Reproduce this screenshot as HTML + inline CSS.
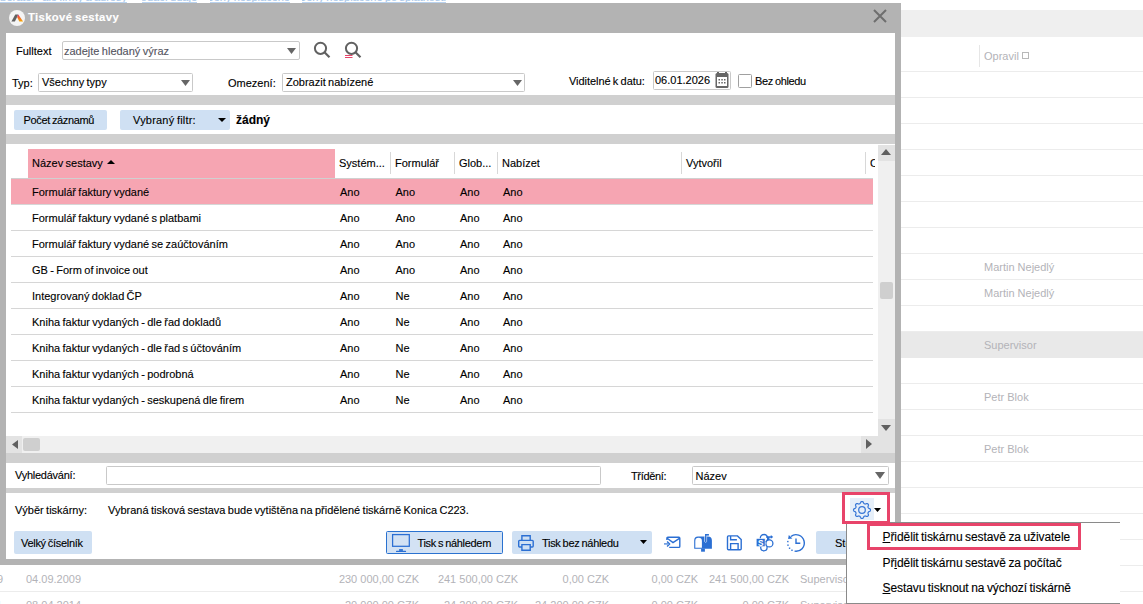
<!DOCTYPE html>
<html><head><meta charset="utf-8"><style>
html,body{margin:0;padding:0;width:1143px;height:604px;overflow:hidden;background:#fff;position:relative}
body{font-family:"Liberation Sans",sans-serif}
.t{position:absolute;white-space:nowrap;word-spacing:-0.7px;-webkit-text-stroke:0.12px currentColor}
u{text-decoration:underline;text-underline-offset:1px}
</style></head><body>
<div style="position:absolute;left:0px;top:-12px;width:127px;height:15px;overflow:hidden"><div class="t" style="right:0;top:4.2px;font-size:11px;line-height:11px;color:#a9c8ea">Odběratel - ale firmy a adresy</div><div style="position:absolute;left:0;right:0;top:14px;height:1px;background:#b9d2ee"></div></div>
<div style="position:absolute;left:142px;top:-12px;width:55px;height:15px;overflow:hidden"><div class="t" style="right:0;top:4.2px;font-size:11px;line-height:11px;color:#a9c8ea">Dodací údaje</div><div style="position:absolute;left:0;right:0;top:14px;height:1px;background:#b9d2ee"></div></div>
<div style="position:absolute;left:210px;top:-12px;width:80px;height:15px;overflow:hidden"><div class="t" style="right:0;top:4.2px;font-size:11px;line-height:11px;color:#a9c8ea">Ceny nesplacené</div><div style="position:absolute;left:0;right:0;top:14px;height:1px;background:#b9d2ee"></div></div>
<div style="position:absolute;left:302px;top:-12px;width:144px;height:15px;overflow:hidden"><div class="t" style="right:0;top:4.2px;font-size:11px;line-height:11px;color:#a9c8ea">Ceny nesplacené po splatnosti</div><div style="position:absolute;left:0;right:0;top:14px;height:1px;background:#b9d2ee"></div></div>
<div style="position:absolute;left:901px;top:10px;width:242px;height:27px;background:#efefef"></div>
<div style="position:absolute;left:979px;top:45px;width:1px;height:22px;background:#e6e6e6"></div>
<div class="t" style="left:984px;top:51.19px;font-size:11px;line-height:11px;color:#b3b3b8;font-weight:normal;transform:scaleY(1.06);transform-origin:0 9.31px;word-spacing:0;-webkit-text-stroke:0;">Opravil</div>
<div style="position:absolute;left:1022px;top:52px;width:7px;height:7px;border:1px solid #b8b8b8;box-sizing:border-box"></div>
<div style="position:absolute;left:901px;top:71px;width:242px;height:1px;background:#ececec"></div>
<div style="position:absolute;left:901px;top:97px;width:242px;height:1px;background:#ececec"></div>
<div style="position:absolute;left:901px;top:123px;width:242px;height:1px;background:#ececec"></div>
<div style="position:absolute;left:901px;top:149px;width:242px;height:1px;background:#ececec"></div>
<div style="position:absolute;left:901px;top:175px;width:242px;height:1px;background:#ececec"></div>
<div style="position:absolute;left:901px;top:201px;width:242px;height:1px;background:#ececec"></div>
<div style="position:absolute;left:901px;top:227px;width:242px;height:1px;background:#ececec"></div>
<div style="position:absolute;left:901px;top:253px;width:242px;height:1px;background:#ececec"></div>
<div style="position:absolute;left:901px;top:279px;width:242px;height:1px;background:#ececec"></div>
<div style="position:absolute;left:901px;top:305px;width:242px;height:1px;background:#ececec"></div>
<div style="position:absolute;left:901px;top:331px;width:242px;height:1px;background:#ececec"></div>
<div style="position:absolute;left:901px;top:357px;width:242px;height:1px;background:#ececec"></div>
<div style="position:absolute;left:901px;top:383px;width:242px;height:1px;background:#ececec"></div>
<div style="position:absolute;left:901px;top:409px;width:242px;height:1px;background:#ececec"></div>
<div style="position:absolute;left:901px;top:435px;width:242px;height:1px;background:#ececec"></div>
<div style="position:absolute;left:901px;top:461px;width:242px;height:1px;background:#ececec"></div>
<div style="position:absolute;left:901px;top:487px;width:242px;height:1px;background:#ececec"></div>
<div style="position:absolute;left:901px;top:513px;width:242px;height:1px;background:#ececec"></div>
<div style="position:absolute;left:901px;top:539px;width:242px;height:1px;background:#ececec"></div>
<div style="position:absolute;left:901px;top:565px;width:242px;height:1px;background:#ececec"></div>
<div style="position:absolute;left:901px;top:591px;width:242px;height:1px;background:#ececec"></div>
<div style="position:absolute;left:901px;top:332px;width:242px;height:26px;background:#e9e9e9"></div>
<div class="t" style="left:984px;top:261.69px;font-size:11px;line-height:11px;color:#b3b3b8;font-weight:normal;transform:scaleY(1.06);transform-origin:0 9.31px;word-spacing:0;-webkit-text-stroke:0;">Martin Nejedlý</div>
<div class="t" style="left:984px;top:287.69px;font-size:11px;line-height:11px;color:#b3b3b8;font-weight:normal;transform:scaleY(1.06);transform-origin:0 9.31px;word-spacing:0;-webkit-text-stroke:0;">Martin Nejedlý</div>
<div class="t" style="left:984px;top:339.69px;font-size:11px;line-height:11px;color:#b3b3b8;font-weight:normal;transform:scaleY(1.06);transform-origin:0 9.31px;word-spacing:0;-webkit-text-stroke:0;">Supervisor</div>
<div class="t" style="left:984px;top:391.69px;font-size:11px;line-height:11px;color:#b3b3b8;font-weight:normal;transform:scaleY(1.06);transform-origin:0 9.31px;word-spacing:0;-webkit-text-stroke:0;">Petr Blok</div>
<div class="t" style="left:984px;top:443.69px;font-size:11px;line-height:11px;color:#b3b3b8;font-weight:normal;transform:scaleY(1.06);transform-origin:0 9.31px;word-spacing:0;-webkit-text-stroke:0;">Petr Blok</div>
<div style="position:absolute;left:0px;top:591px;width:1143px;height:1px;background:#ececec"></div>
<div class="t" style="left:-3px;top:573.69px;font-size:11px;line-height:11px;color:#b3b3b8;font-weight:normal;transform:scaleY(1.06);transform-origin:0 9.31px;word-spacing:0;-webkit-text-stroke:0;">9</div>
<div class="t" style="left:26px;top:573.69px;font-size:11px;line-height:11px;color:#b3b3b8;font-weight:normal;transform:scaleY(1.06);transform-origin:0 9.31px;word-spacing:0;-webkit-text-stroke:0;">04.09.2009</div>
<div class="t" style="right:724px;top:573.69px;font-size:11px;line-height:11px;color:#b3b3b8;word-spacing:0;-webkit-text-stroke:0;transform:scaleY(1.06);transform-origin:0 9.31px">230 000,00 CZK</div>
<div class="t" style="right:625px;top:573.69px;font-size:11px;line-height:11px;color:#b3b3b8;word-spacing:0;-webkit-text-stroke:0;transform:scaleY(1.06);transform-origin:0 9.31px">241 500,00 CZK</div>
<div class="t" style="right:534px;top:573.69px;font-size:11px;line-height:11px;color:#b3b3b8;word-spacing:0;-webkit-text-stroke:0;transform:scaleY(1.06);transform-origin:0 9.31px">0,00 CZK</div>
<div class="t" style="right:445px;top:573.69px;font-size:11px;line-height:11px;color:#b3b3b8;word-spacing:0;-webkit-text-stroke:0;transform:scaleY(1.06);transform-origin:0 9.31px">0,00 CZK</div>
<div class="t" style="right:354px;top:573.69px;font-size:11px;line-height:11px;color:#b3b3b8;word-spacing:0;-webkit-text-stroke:0;transform:scaleY(1.06);transform-origin:0 9.31px">241 500,00 CZK</div>
<div class="t" style="left:800px;top:573.69px;font-size:11px;line-height:11px;color:#b3b3b8;font-weight:normal;transform:scaleY(1.06);transform-origin:0 9.31px;word-spacing:0;-webkit-text-stroke:0;">Supervisor</div>
<div class="t" style="left:-4px;top:599.69px;font-size:11px;line-height:11px;color:#b3b3b8;font-weight:normal;transform:scaleY(1.06);transform-origin:0 9.31px;word-spacing:0;-webkit-text-stroke:0;">1</div>
<div class="t" style="left:26px;top:599.69px;font-size:11px;line-height:11px;color:#b3b3b8;font-weight:normal;transform:scaleY(1.06);transform-origin:0 9.31px;word-spacing:0;-webkit-text-stroke:0;">08.04.2014</div>
<div class="t" style="right:724px;top:599.69px;font-size:11px;line-height:11px;color:#b3b3b8;word-spacing:0;-webkit-text-stroke:0;transform:scaleY(1.06);transform-origin:0 9.31px">20 000,00 CZK</div>
<div class="t" style="right:625px;top:599.69px;font-size:11px;line-height:11px;color:#b3b3b8;word-spacing:0;-webkit-text-stroke:0;transform:scaleY(1.06);transform-origin:0 9.31px">24 200,00 CZK</div>
<div class="t" style="right:534px;top:599.69px;font-size:11px;line-height:11px;color:#b3b3b8;word-spacing:0;-webkit-text-stroke:0;transform:scaleY(1.06);transform-origin:0 9.31px">24 200,00 CZK</div>
<div class="t" style="right:445px;top:599.69px;font-size:11px;line-height:11px;color:#b3b3b8;word-spacing:0;-webkit-text-stroke:0;transform:scaleY(1.06);transform-origin:0 9.31px">0,00 CZK</div>
<div class="t" style="right:354px;top:599.69px;font-size:11px;line-height:11px;color:#b3b3b8;word-spacing:0;-webkit-text-stroke:0;transform:scaleY(1.06);transform-origin:0 9.31px">0,00 CZK</div>
<div class="t" style="left:800px;top:599.69px;font-size:11px;line-height:11px;color:#b3b3b8;font-weight:normal;transform:scaleY(1.06);transform-origin:0 9.31px;word-spacing:0;-webkit-text-stroke:0;">Supervisor</div>
<div style="position:absolute;left:-10px;top:3px;width:911px;height:562px;background:#b3b3b3"></div>
<div style="position:absolute;left:6px;top:33px;width:889px;height:526px;background:#fff"></div>
<svg style="position:absolute;left:9px;top:10px" width="16" height="16" viewBox="0 0 16 16"><defs><linearGradient id="lg" x1="0" y1="0" x2="0" y2="1"><stop offset="0" stop-color="#e5236e"/><stop offset="0.45" stop-color="#f26a2e"/><stop offset="1" stop-color="#f7a800"/></linearGradient></defs><circle cx="8" cy="8" r="8" fill="#f4f4f4"/><path d="M6.3 4.5 L9.3 4.5 L5.9 11.5 L2.4 11.5Z" fill="#626262"/><path d="M9.3 4.5 L14.1 11.5 L10.3 11.5 L8.1 7Z" fill="url(#lg)"/></svg>
<div class="t" style="left:28px;top:11.93px;font-size:11.3px;line-height:11.3px;color:#fff;font-weight:bold;letter-spacing:0.35px">Tiskové sestavy</div>
<svg style="position:absolute;left:873px;top:9px" width="14" height="14" viewBox="0 0 14 14"><path d="M1 1L13 13M13 1L1 13" stroke="#6e6e6e" stroke-width="2"/></svg>
<div class="t" style="left:16px;top:45.69px;font-size:11px;line-height:11px;color:#000;font-weight:normal;transform:scaleY(1.06);transform-origin:0 9.31px;">Fulltext</div>
<div style="position:absolute;left:62px;top:41px;width:238px;height:19px;border:1px solid #c9c9c9;box-sizing:border-box;border-radius:2px;background:#fff"></div>
<div class="t" style="left:64px;top:45.69px;font-size:11px;line-height:11px;color:#55555f;font-weight:normal;transform:scaleY(1.06);transform-origin:0 9.31px;">zadejte hledaný výraz</div>
<svg style="position:absolute;left:287px;top:48px" width="9" height="6" viewBox="0 0 9 6"><path d="M0 0H9L4.5 6Z" fill="#666"/></svg>
<svg style="position:absolute;left:313px;top:41px" width="19" height="18" viewBox="0 0 19 18"><circle cx="7.5" cy="7.3" r="5.6" fill="none" stroke="#616161" stroke-width="2"/><path d="M11.5 11.3L16.5 16.3" stroke="#616161" stroke-width="2.2"/></svg>
<svg style="position:absolute;left:344px;top:41px" width="19" height="18" viewBox="0 0 19 18"><circle cx="7.5" cy="7.3" r="5.6" fill="none" stroke="#616161" stroke-width="2"/><path d="M11.5 11.3L16.5 16.3" stroke="#616161" stroke-width="2.2"/><path d="M1 14.5H8.5M1 16.5H8.5" stroke="#e8446a" stroke-width="1"/></svg>
<div class="t" style="left:12px;top:77.69px;font-size:11px;line-height:11px;color:#000;font-weight:normal;transform:scaleY(1.06);transform-origin:0 9.31px;">Typ:</div>
<div style="position:absolute;left:38px;top:73px;width:155px;height:19px;border:1px solid #c9c9c9;box-sizing:border-box;border-radius:1.5px"></div>
<div class="t" style="left:42px;top:76.69px;font-size:11px;line-height:11px;color:#000;font-weight:normal;transform:scaleY(1.06);transform-origin:0 9.31px;">Všechny typy</div>
<svg style="position:absolute;left:181px;top:80px" width="9" height="6" viewBox="0 0 9 6"><path d="M0 0H9L4.5 6Z" fill="#666"/></svg>
<div class="t" style="left:228px;top:77.69px;font-size:11px;line-height:11px;color:#000;font-weight:normal;transform:scaleY(1.06);transform-origin:0 9.31px;">Omezení:</div>
<div style="position:absolute;left:282px;top:73px;width:243px;height:19px;border:1px solid #c9c9c9;box-sizing:border-box;border-radius:1.5px"></div>
<div class="t" style="left:286px;top:76.69px;font-size:11px;line-height:11px;color:#000;font-weight:normal;transform:scaleY(1.06);transform-origin:0 9.31px;">Zobrazit nabízené</div>
<svg style="position:absolute;left:513px;top:80px" width="9" height="6" viewBox="0 0 9 6"><path d="M0 0H9L4.5 6Z" fill="#666"/></svg>
<div class="t" style="left:569px;top:75.69px;font-size:11px;line-height:11px;color:#000;font-weight:normal;transform:scaleY(1.06);transform-origin:0 9.31px;letter-spacing:-0.05px">Viditelné k datu:</div>
<div style="position:absolute;left:653px;top:71px;width:78px;height:19px;border:1px solid #c9c9c9;box-sizing:border-box;border-radius:1.5px"></div>
<div class="t" style="left:655px;top:74.69px;font-size:11px;line-height:11px;color:#000;font-weight:normal;transform:scaleY(1.06);transform-origin:0 9.31px;">06.01.2026</div>
<svg style="position:absolute;left:715px;top:72px" width="14" height="16" viewBox="0 0 14 16"><rect x="0.5" y="1" width="13" height="15" rx="1.5" fill="#666"/><rect x="2" y="5" width="10" height="9" fill="#fff"/><rect x="2" y="0" width="2" height="3" fill="#666"/><rect x="10" y="0" width="2" height="3" fill="#666"/><g fill="#666"><rect x="3.5" y="7" width="1.5" height="1.5"/><rect x="6.3" y="7" width="1.5" height="1.5"/><rect x="9" y="7" width="1.5" height="1.5"/><rect x="3.5" y="10" width="1.5" height="1.5"/><rect x="6.3" y="10" width="1.5" height="1.5"/><rect x="9" y="10" width="1.5" height="1.5"/></g></svg>
<div style="position:absolute;left:738px;top:74px;width:14px;height:14px;border:1px solid #a0a0a0;box-sizing:border-box;border-radius:1.5px"></div>
<div class="t" style="left:755px;top:75.69px;font-size:11px;line-height:11px;color:#000;font-weight:normal;transform:scaleY(1.06);transform-origin:0 9.31px;letter-spacing:-0.35px">Bez ohledu</div>
<div style="position:absolute;left:6px;top:95px;width:889px;height:10px;background:#d0d0d0"></div>
<div style="position:absolute;left:14px;top:110px;width:93px;height:20px;background:#cfe0f3;border-radius:2px"></div>
<div class="t" style="left:23.5px;top:114.69px;font-size:11px;line-height:11px;color:#000;font-weight:normal;transform:scaleY(1.06);transform-origin:0 9.31px;letter-spacing:-0.35px">Počet záznamů</div>
<div style="position:absolute;left:120px;top:110px;width:110px;height:20px;background:#cfe0f3;border-radius:2px"></div>
<div class="t" style="left:133px;top:114.69px;font-size:11px;line-height:11px;color:#000;font-weight:normal;transform:scaleY(1.06);transform-origin:0 9.31px;letter-spacing:0.2px">Vybraný filtr:</div>
<svg style="position:absolute;left:218px;top:118px" width="8" height="4" viewBox="0 0 8 4"><path d="M0 0H8L4.0 4Z" fill="#000"/></svg>
<div class="t" style="left:236px;top:113.84px;font-size:12px;line-height:12px;color:#000;font-weight:bold;">žádný</div>
<div style="position:absolute;left:6px;top:134px;width:889px;height:10px;background:#d0d0d0"></div>
<div style="position:absolute;left:28px;top:149px;width:307px;height:29px;background:#f6a5b2"></div>
<div class="t" style="left:32px;top:158.19px;font-size:11px;line-height:11px;color:#000;font-weight:normal;transform:scaleY(1.06);transform-origin:0 9.31px;">Název sestavy</div>
<svg style="position:absolute;left:107px;top:160px" width="8" height="4" viewBox="0 0 8 4"><path d="M0 4H8L4 0Z" fill="#000"/></svg>
<div class="t" style="left:339px;top:158.19px;font-size:11px;line-height:11px;color:#000;font-weight:normal;transform:scaleY(1.06);transform-origin:0 9.31px;">Systém...</div>
<div class="t" style="left:395px;top:158.19px;font-size:11px;line-height:11px;color:#000;font-weight:normal;transform:scaleY(1.06);transform-origin:0 9.31px;">Formulář</div>
<div class="t" style="left:459px;top:158.19px;font-size:11px;line-height:11px;color:#000;font-weight:normal;transform:scaleY(1.06);transform-origin:0 9.31px;">Glob...</div>
<div class="t" style="left:502px;top:158.19px;font-size:11px;line-height:11px;color:#000;font-weight:normal;transform:scaleY(1.06);transform-origin:0 9.31px;">Nabízet</div>
<div class="t" style="left:686px;top:158.19px;font-size:11px;line-height:11px;color:#000;font-weight:normal;transform:scaleY(1.06);transform-origin:0 9.31px;">Vytvořil</div>
<div style="position:absolute;left:390px;top:152px;width:1px;height:22px;background:#d8d8d8"></div>
<div style="position:absolute;left:454px;top:152px;width:1px;height:22px;background:#d8d8d8"></div>
<div style="position:absolute;left:497px;top:152px;width:1px;height:22px;background:#d8d8d8"></div>
<div style="position:absolute;left:681px;top:152px;width:1px;height:22px;background:#d8d8d8"></div>
<div style="position:absolute;left:865px;top:152px;width:1px;height:22px;background:#d8d8d8"></div>
<div style="position:absolute;left:870px;top:150px;width:5px;height:30px;overflow:hidden"><div class="t" style="left:0;top:8.19px;font-size:11px;line-height:11px">C</div></div>
<div style="position:absolute;left:11px;top:178px;width:862px;height:1px;background:#d0d0d0"></div>
<div style="position:absolute;left:11px;top:179px;width:862px;height:25px;background:#f6a5b2"></div>
<div class="t" style="left:32px;top:186.69px;font-size:11px;line-height:11px;color:#000;font-weight:normal;transform:scaleY(1.06);transform-origin:0 9.31px;">Formulář faktury vydané</div>
<div class="t" style="left:340px;top:186.69px;font-size:11px;line-height:11px;color:#000;font-weight:normal;transform:scaleY(1.06);transform-origin:0 9.31px;">Ano</div>
<div class="t" style="left:395.5px;top:186.69px;font-size:11px;line-height:11px;color:#000;font-weight:normal;transform:scaleY(1.06);transform-origin:0 9.31px;">Ano</div>
<div class="t" style="left:460px;top:186.69px;font-size:11px;line-height:11px;color:#000;font-weight:normal;transform:scaleY(1.06);transform-origin:0 9.31px;">Ano</div>
<div class="t" style="left:503px;top:186.69px;font-size:11px;line-height:11px;color:#000;font-weight:normal;transform:scaleY(1.06);transform-origin:0 9.31px;">Ano</div>
<div style="position:absolute;left:11px;top:204px;width:862px;height:1px;background:#d6d6d6"></div>
<div class="t" style="left:32px;top:212.69px;font-size:11px;line-height:11px;color:#000;font-weight:normal;transform:scaleY(1.06);transform-origin:0 9.31px;">Formulář faktury vydané s platbami</div>
<div class="t" style="left:340px;top:212.69px;font-size:11px;line-height:11px;color:#000;font-weight:normal;transform:scaleY(1.06);transform-origin:0 9.31px;">Ano</div>
<div class="t" style="left:395.5px;top:212.69px;font-size:11px;line-height:11px;color:#000;font-weight:normal;transform:scaleY(1.06);transform-origin:0 9.31px;">Ano</div>
<div class="t" style="left:460px;top:212.69px;font-size:11px;line-height:11px;color:#000;font-weight:normal;transform:scaleY(1.06);transform-origin:0 9.31px;">Ano</div>
<div class="t" style="left:503px;top:212.69px;font-size:11px;line-height:11px;color:#000;font-weight:normal;transform:scaleY(1.06);transform-origin:0 9.31px;">Ano</div>
<div style="position:absolute;left:11px;top:230px;width:862px;height:1px;background:#d6d6d6"></div>
<div class="t" style="left:32px;top:238.69px;font-size:11px;line-height:11px;color:#000;font-weight:normal;transform:scaleY(1.06);transform-origin:0 9.31px;">Formulář faktury vydané se zaúčtováním</div>
<div class="t" style="left:340px;top:238.69px;font-size:11px;line-height:11px;color:#000;font-weight:normal;transform:scaleY(1.06);transform-origin:0 9.31px;">Ano</div>
<div class="t" style="left:395.5px;top:238.69px;font-size:11px;line-height:11px;color:#000;font-weight:normal;transform:scaleY(1.06);transform-origin:0 9.31px;">Ano</div>
<div class="t" style="left:460px;top:238.69px;font-size:11px;line-height:11px;color:#000;font-weight:normal;transform:scaleY(1.06);transform-origin:0 9.31px;">Ano</div>
<div class="t" style="left:503px;top:238.69px;font-size:11px;line-height:11px;color:#000;font-weight:normal;transform:scaleY(1.06);transform-origin:0 9.31px;">Ano</div>
<div style="position:absolute;left:11px;top:256px;width:862px;height:1px;background:#d6d6d6"></div>
<div class="t" style="left:32px;top:264.69px;font-size:11px;line-height:11px;color:#000;font-weight:normal;transform:scaleY(1.06);transform-origin:0 9.31px;">GB - Form of invoice out</div>
<div class="t" style="left:340px;top:264.69px;font-size:11px;line-height:11px;color:#000;font-weight:normal;transform:scaleY(1.06);transform-origin:0 9.31px;">Ano</div>
<div class="t" style="left:395.5px;top:264.69px;font-size:11px;line-height:11px;color:#000;font-weight:normal;transform:scaleY(1.06);transform-origin:0 9.31px;">Ano</div>
<div class="t" style="left:460px;top:264.69px;font-size:11px;line-height:11px;color:#000;font-weight:normal;transform:scaleY(1.06);transform-origin:0 9.31px;">Ano</div>
<div class="t" style="left:503px;top:264.69px;font-size:11px;line-height:11px;color:#000;font-weight:normal;transform:scaleY(1.06);transform-origin:0 9.31px;">Ano</div>
<div style="position:absolute;left:11px;top:282px;width:862px;height:1px;background:#d6d6d6"></div>
<div class="t" style="left:32px;top:290.69px;font-size:11px;line-height:11px;color:#000;font-weight:normal;transform:scaleY(1.06);transform-origin:0 9.31px;">Integrovaný doklad ČP</div>
<div class="t" style="left:340px;top:290.69px;font-size:11px;line-height:11px;color:#000;font-weight:normal;transform:scaleY(1.06);transform-origin:0 9.31px;">Ano</div>
<div class="t" style="left:395.5px;top:290.69px;font-size:11px;line-height:11px;color:#000;font-weight:normal;transform:scaleY(1.06);transform-origin:0 9.31px;">Ne</div>
<div class="t" style="left:460px;top:290.69px;font-size:11px;line-height:11px;color:#000;font-weight:normal;transform:scaleY(1.06);transform-origin:0 9.31px;">Ano</div>
<div class="t" style="left:503px;top:290.69px;font-size:11px;line-height:11px;color:#000;font-weight:normal;transform:scaleY(1.06);transform-origin:0 9.31px;">Ano</div>
<div style="position:absolute;left:11px;top:308px;width:862px;height:1px;background:#d6d6d6"></div>
<div class="t" style="left:32px;top:316.69px;font-size:11px;line-height:11px;color:#000;font-weight:normal;transform:scaleY(1.06);transform-origin:0 9.31px;">Kniha faktur vydaných - dle řad dokladů</div>
<div class="t" style="left:340px;top:316.69px;font-size:11px;line-height:11px;color:#000;font-weight:normal;transform:scaleY(1.06);transform-origin:0 9.31px;">Ano</div>
<div class="t" style="left:395.5px;top:316.69px;font-size:11px;line-height:11px;color:#000;font-weight:normal;transform:scaleY(1.06);transform-origin:0 9.31px;">Ne</div>
<div class="t" style="left:460px;top:316.69px;font-size:11px;line-height:11px;color:#000;font-weight:normal;transform:scaleY(1.06);transform-origin:0 9.31px;">Ano</div>
<div class="t" style="left:503px;top:316.69px;font-size:11px;line-height:11px;color:#000;font-weight:normal;transform:scaleY(1.06);transform-origin:0 9.31px;">Ano</div>
<div style="position:absolute;left:11px;top:334px;width:862px;height:1px;background:#d6d6d6"></div>
<div class="t" style="left:32px;top:342.69px;font-size:11px;line-height:11px;color:#000;font-weight:normal;transform:scaleY(1.06);transform-origin:0 9.31px;">Kniha faktur vydaných - dle řad s účtováním</div>
<div class="t" style="left:340px;top:342.69px;font-size:11px;line-height:11px;color:#000;font-weight:normal;transform:scaleY(1.06);transform-origin:0 9.31px;">Ano</div>
<div class="t" style="left:395.5px;top:342.69px;font-size:11px;line-height:11px;color:#000;font-weight:normal;transform:scaleY(1.06);transform-origin:0 9.31px;">Ne</div>
<div class="t" style="left:460px;top:342.69px;font-size:11px;line-height:11px;color:#000;font-weight:normal;transform:scaleY(1.06);transform-origin:0 9.31px;">Ano</div>
<div class="t" style="left:503px;top:342.69px;font-size:11px;line-height:11px;color:#000;font-weight:normal;transform:scaleY(1.06);transform-origin:0 9.31px;">Ano</div>
<div style="position:absolute;left:11px;top:360px;width:862px;height:1px;background:#d6d6d6"></div>
<div class="t" style="left:32px;top:368.69px;font-size:11px;line-height:11px;color:#000;font-weight:normal;transform:scaleY(1.06);transform-origin:0 9.31px;">Kniha faktur vydaných - podrobná</div>
<div class="t" style="left:340px;top:368.69px;font-size:11px;line-height:11px;color:#000;font-weight:normal;transform:scaleY(1.06);transform-origin:0 9.31px;">Ano</div>
<div class="t" style="left:395.5px;top:368.69px;font-size:11px;line-height:11px;color:#000;font-weight:normal;transform:scaleY(1.06);transform-origin:0 9.31px;">Ne</div>
<div class="t" style="left:460px;top:368.69px;font-size:11px;line-height:11px;color:#000;font-weight:normal;transform:scaleY(1.06);transform-origin:0 9.31px;">Ano</div>
<div class="t" style="left:503px;top:368.69px;font-size:11px;line-height:11px;color:#000;font-weight:normal;transform:scaleY(1.06);transform-origin:0 9.31px;">Ano</div>
<div style="position:absolute;left:11px;top:386px;width:862px;height:1px;background:#d6d6d6"></div>
<div class="t" style="left:32px;top:394.69px;font-size:11px;line-height:11px;color:#000;font-weight:normal;transform:scaleY(1.06);transform-origin:0 9.31px;">Kniha faktur vydaných - seskupená dle firem</div>
<div class="t" style="left:340px;top:394.69px;font-size:11px;line-height:11px;color:#000;font-weight:normal;transform:scaleY(1.06);transform-origin:0 9.31px;">Ano</div>
<div class="t" style="left:395.5px;top:394.69px;font-size:11px;line-height:11px;color:#000;font-weight:normal;transform:scaleY(1.06);transform-origin:0 9.31px;">Ne</div>
<div class="t" style="left:460px;top:394.69px;font-size:11px;line-height:11px;color:#000;font-weight:normal;transform:scaleY(1.06);transform-origin:0 9.31px;">Ano</div>
<div class="t" style="left:503px;top:394.69px;font-size:11px;line-height:11px;color:#000;font-weight:normal;transform:scaleY(1.06);transform-origin:0 9.31px;">Ano</div>
<div style="position:absolute;left:11px;top:412px;width:862px;height:1px;background:#d6d6d6"></div>
<div style="position:absolute;left:878px;top:145px;width:17px;height:291px;background:#f0f0f0"></div>
<div style="position:absolute;left:878px;top:145px;width:17px;height:16px;background:#e3e3e3"></div>
<svg style="position:absolute;left:881px;top:149px" width="10" height="6" viewBox="0 0 10 6"><path d="M0 6H10L5 0Z" fill="#606060"/></svg>
<div style="position:absolute;left:880px;top:282px;width:13px;height:17px;background:#cfcfcf;border-radius:2px"></div>
<div style="position:absolute;left:878px;top:419px;width:17px;height:17px;background:#e3e3e3"></div>
<svg style="position:absolute;left:881px;top:425px" width="10" height="6" viewBox="0 0 10 6"><path d="M0 0H10L5 6Z" fill="#606060"/></svg>
<div style="position:absolute;left:6px;top:436px;width:872px;height:17px;background:#f0f0f0"></div>
<div style="position:absolute;left:6px;top:436px;width:16px;height:17px;background:#e3e3e3"></div>
<svg style="position:absolute;left:12px;top:440px" width="6" height="9" viewBox="0 0 6 9"><path d="M6 0V9L0 4.5Z" fill="#606060"/></svg>
<div style="position:absolute;left:23px;top:438px;width:17px;height:13px;background:#cfcfcf;border-radius:2px"></div>
<div style="position:absolute;left:861px;top:436px;width:17px;height:17px;background:#e3e3e3"></div>
<svg style="position:absolute;left:866px;top:439px" width="6" height="10" viewBox="0 0 6 10"><path d="M0 0V10L6 5Z" fill="#606060"/></svg>
<div style="position:absolute;left:878px;top:436px;width:17px;height:17px;background:#e3e3e3"></div>
<div style="position:absolute;left:6px;top:453px;width:889px;height:10px;background:#d0d0d0"></div>
<div class="t" style="left:15px;top:469.69px;font-size:11px;line-height:11px;color:#000;font-weight:normal;transform:scaleY(1.06);transform-origin:0 9.31px;letter-spacing:-0.25px">Vyhledávání:</div>
<div style="position:absolute;left:106px;top:466px;width:495px;height:19px;border:1px solid #c9c9c9;box-sizing:border-box;border-radius:1.5px"></div>
<div class="t" style="left:631px;top:470.69px;font-size:11px;line-height:11px;color:#000;font-weight:normal;transform:scaleY(1.06);transform-origin:0 9.31px;letter-spacing:-0.35px">Třídění:</div>
<div style="position:absolute;left:692px;top:466px;width:197px;height:19px;border:1px solid #c9c9c9;box-sizing:border-box;border-radius:1.5px"></div>
<div class="t" style="left:695.5px;top:470.69px;font-size:11px;line-height:11px;color:#000;font-weight:normal;transform:scaleY(1.06);transform-origin:0 9.31px;">Název</div>
<svg style="position:absolute;left:875px;top:472px" width="10" height="7" viewBox="0 0 10 7"><path d="M0 0H10L5.0 7Z" fill="#666"/></svg>
<div style="position:absolute;left:6px;top:488px;width:889px;height:5px;background:#d0d0d0"></div>
<div class="t" style="left:15px;top:504.69px;font-size:11px;line-height:11px;color:#000;font-weight:normal;transform:scaleY(1.06);transform-origin:0 9.31px;">Výběr tiskárny:</div>
<div class="t" style="left:108px;top:504.69px;font-size:11px;line-height:11px;color:#000;font-weight:normal;transform:scaleY(1.06);transform-origin:0 9.31px;">Vybraná tisková sestava bude vytištěna na přidělené tiskárně Konica C223.</div>
<div style="position:absolute;left:850px;top:498px;width:24px;height:22px;background:#e6eff9"></div>
<svg style="position:absolute;left:844px;top:492px" width="36" height="36" viewBox="0 0 36 36"><path fill="none" stroke="#3a78d6" stroke-width="1.25" d="M18.00 9.55 L18.22 9.56 L18.44 9.59 L18.66 9.66 L18.87 9.76 L19.06 9.92 L19.24 10.15 L19.40 10.44 L19.54 10.75 L19.67 11.05 L19.80 11.28 L19.94 11.46 L20.08 11.60 L20.23 11.70 L20.39 11.78 L20.54 11.86 L20.71 11.92 L20.88 11.97 L21.06 12.00 L21.25 12.01 L21.48 11.98 L21.74 11.90 L22.04 11.79 L22.36 11.66 L22.67 11.57 L22.96 11.54 L23.21 11.56 L23.43 11.64 L23.63 11.75 L23.81 11.88 L23.98 12.02 L24.12 12.19 L24.25 12.37 L24.36 12.57 L24.44 12.79 L24.46 13.04 L24.43 13.33 L24.34 13.64 L24.21 13.96 L24.10 14.26 L24.02 14.52 L23.99 14.75 L24.00 14.94 L24.03 15.12 L24.08 15.29 L24.14 15.46 L24.22 15.61 L24.30 15.77 L24.40 15.92 L24.54 16.06 L24.72 16.20 L24.95 16.33 L25.25 16.46 L25.56 16.60 L25.85 16.76 L26.08 16.94 L26.24 17.13 L26.34 17.34 L26.41 17.56 L26.44 17.78 L26.45 18.00 L26.44 18.22 L26.41 18.44 L26.34 18.66 L26.24 18.87 L26.08 19.06 L25.85 19.24 L25.56 19.40 L25.25 19.54 L24.95 19.67 L24.72 19.80 L24.54 19.94 L24.40 20.08 L24.30 20.23 L24.22 20.39 L24.14 20.54 L24.08 20.71 L24.03 20.88 L24.00 21.06 L23.99 21.25 L24.02 21.48 L24.10 21.74 L24.21 22.04 L24.34 22.36 L24.43 22.67 L24.46 22.96 L24.44 23.21 L24.36 23.43 L24.25 23.63 L24.12 23.81 L23.98 23.98 L23.81 24.12 L23.63 24.25 L23.43 24.36 L23.21 24.44 L22.96 24.46 L22.67 24.43 L22.36 24.34 L22.04 24.21 L21.74 24.10 L21.48 24.02 L21.25 23.99 L21.06 24.00 L20.88 24.03 L20.71 24.08 L20.54 24.14 L20.39 24.22 L20.23 24.30 L20.08 24.40 L19.94 24.54 L19.80 24.72 L19.67 24.95 L19.54 25.25 L19.40 25.56 L19.24 25.85 L19.06 26.08 L18.87 26.24 L18.66 26.34 L18.44 26.41 L18.22 26.44 L18.00 26.45 L17.78 26.44 L17.56 26.41 L17.34 26.34 L17.13 26.24 L16.94 26.08 L16.76 25.85 L16.60 25.56 L16.46 25.25 L16.33 24.95 L16.20 24.72 L16.06 24.54 L15.92 24.40 L15.77 24.30 L15.61 24.22 L15.46 24.14 L15.29 24.08 L15.12 24.03 L14.94 24.00 L14.75 23.99 L14.52 24.02 L14.26 24.10 L13.96 24.21 L13.64 24.34 L13.33 24.43 L13.04 24.46 L12.79 24.44 L12.57 24.36 L12.37 24.25 L12.19 24.12 L12.02 23.98 L11.88 23.81 L11.75 23.63 L11.64 23.43 L11.56 23.21 L11.54 22.96 L11.57 22.67 L11.66 22.36 L11.79 22.04 L11.90 21.74 L11.98 21.48 L12.01 21.25 L12.00 21.06 L11.97 20.88 L11.92 20.71 L11.86 20.54 L11.78 20.39 L11.70 20.23 L11.60 20.08 L11.46 19.94 L11.28 19.80 L11.05 19.67 L10.75 19.54 L10.44 19.40 L10.15 19.24 L9.92 19.06 L9.76 18.87 L9.66 18.66 L9.59 18.44 L9.56 18.22 L9.55 18.00 L9.56 17.78 L9.59 17.56 L9.66 17.34 L9.76 17.13 L9.92 16.94 L10.15 16.76 L10.44 16.60 L10.75 16.46 L11.05 16.33 L11.28 16.20 L11.46 16.06 L11.60 15.92 L11.70 15.77 L11.78 15.61 L11.86 15.46 L11.92 15.29 L11.97 15.12 L12.00 14.94 L12.01 14.75 L11.98 14.52 L11.90 14.26 L11.79 13.96 L11.66 13.64 L11.57 13.33 L11.54 13.04 L11.56 12.79 L11.64 12.57 L11.75 12.37 L11.88 12.19 L12.02 12.02 L12.19 11.88 L12.37 11.75 L12.57 11.64 L12.79 11.56 L13.04 11.54 L13.33 11.57 L13.64 11.66 L13.96 11.79 L14.26 11.90 L14.52 11.98 L14.75 12.01 L14.94 12.00 L15.12 11.97 L15.29 11.92 L15.46 11.86 L15.61 11.78 L15.77 11.70 L15.92 11.60 L16.06 11.46 L16.20 11.28 L16.33 11.05 L16.46 10.75 L16.60 10.44 L16.76 10.15 L16.94 9.92 L17.13 9.76 L17.34 9.66 L17.56 9.59 L17.78 9.56 L18.00 9.55Z"/><circle cx="18" cy="18" r="3.3" fill="none" stroke="#3a78d6" stroke-width="1.25"/></svg>
<svg style="position:absolute;left:874px;top:508px" width="7" height="4" viewBox="0 0 7 4"><path d="M0 0H7L3.5 4Z" fill="#000"/></svg>
<div style="position:absolute;left:14px;top:531px;width:78px;height:23px;background:#cfe0f3;border-radius:2px"></div>
<div class="t" style="left:21px;top:537.69px;font-size:11px;line-height:11px;color:#000;font-weight:normal;transform:scaleY(1.06);transform-origin:0 9.31px;letter-spacing:-0.3px">Velký číselník</div>
<div style="position:absolute;left:386px;top:531px;width:117px;height:23px;background:#d3e2f4;border:1px solid #2a72d0;box-sizing:border-box;border-radius:1.5px"></div>
<svg style="position:absolute;left:388px;top:530px" width="26" height="24" viewBox="0 0 26 24"><rect x="4.6" y="4.6" width="16.7" height="11.7" fill="none" stroke="#2b6fd3" stroke-width="1.25"/><rect x="11.1" y="19.1" width="3.8" height="1.8" fill="#2b6fd3"/><rect x="8" y="20.7" width="10.1" height="1.3" rx="0.6" fill="#2b6fd3"/></svg>
<div class="t" style="left:417.5px;top:537.69px;font-size:11px;line-height:11px;color:#000;font-weight:normal;transform:scaleY(1.06);transform-origin:0 9.31px;letter-spacing:-0.32px">Tisk s náhledem</div>
<div style="position:absolute;left:512px;top:531px;width:140px;height:23px;background:#cfe0f3;border-radius:2px"></div>
<svg style="position:absolute;left:514px;top:530px" width="26" height="24" viewBox="0 0 26 24"><path fill="none" stroke="#2b6fd3" stroke-width="1.4" d="M7.9 10.3V5.7H16.2V10.3M7.9 17H5.6a.9.9 0 0 1-.9-.9V11.3a.9.9 0 0 1 .9-.9H18.3a.9.9 0 0 1 .9.9V16.1a.9.9 0 0 1-.9.9H16.2M7.9 14.6H16.2V20.2H7.9Z"/></svg>
<div class="t" style="left:542px;top:537.69px;font-size:11px;line-height:11px;color:#000;font-weight:normal;transform:scaleY(1.06);transform-origin:0 9.31px;letter-spacing:-0.3px">Tisk bez náhledu</div>
<svg style="position:absolute;left:640px;top:540px" width="7" height="4" viewBox="0 0 7 4"><path d="M0 0H7L3.5 4Z" fill="#000"/></svg>
<svg style="position:absolute;left:660px;top:530px" width="26" height="24" viewBox="0 0 26 24"><path fill="none" stroke="#2b6fd3" stroke-width="1.4" d="M6.9 10V8.2a.9.9 0 0 1 .9-.9H18.9a.9.9 0 0 1 .9.9V16.5a.9.9 0 0 1-.9.9H9.2M7.2 8.3L13 12.6L19.4 8.4M7.1 11.4L9.6 13.9L7.1 16.4"/><path stroke="#5b90dd" stroke-width="1.5" d="M4 13.9H8.6"/></svg>
<svg style="position:absolute;left:690px;top:530px" width="26" height="24" viewBox="0 0 26 24"><path fill="#2b6fd3" d="M4.2 18.7V10.4A3.8 3.8 0 0 1 8 6.6H18A3.9 3.9 0 0 1 21.9 10.5V18.7Z"/><path fill="#fff" d="M5.3 17.8V11.1A3.3 3.3 0 0 1 11.9 11.1V17.8Z"/><rect x="11.1" y="18.5" width="3.8" height="3.2" fill="#2b6fd3"/><path fill="none" stroke="#fff" stroke-width="0.7" d="M14.7 6.2V11.3a.95.95 0 0 0 1.9 0V6.2"/><rect x="15.1" y="4" width="3.8" height="1.6" fill="#2b6fd3"/><rect x="15.1" y="4" width="1.2" height="7.9" fill="#2b6fd3"/></svg>
<svg style="position:absolute;left:722px;top:530px" width="26" height="24" viewBox="0 0 26 24"><path fill="none" stroke="#2b6fd3" stroke-width="1.4" d="M6.5 5.9H15.5L19.2 9.6V18.8A1 1 0 0 1 18.2 19.8H6.5A1 1 0 0 1 5.5 18.8V6.9A1 1 0 0 1 6.5 5.9ZM8.6 6V9.8H14.9M8.6 19.8V13.6H16.1V19.8"/></svg>
<svg style="position:absolute;left:752px;top:530px" width="26" height="24" viewBox="0 0 26 24"><circle cx="12" cy="8.2" r="3.7" fill="none" stroke="#2b6fd3" stroke-width="1.3"/><circle cx="11.9" cy="17.6" r="3.2" fill="#fff" stroke="#2b6fd3" stroke-width="1.3"/><circle cx="17.4" cy="13.4" r="3.5" fill="#fff" stroke="#2b6fd3" stroke-width="1.3"/><rect x="4.2" y="8.5" width="8.9" height="8.2" fill="#2b6fd3" stroke="#fff" stroke-width="0.6"/><text x="8.65" y="15.6" text-anchor="middle" font-family="Liberation Sans" font-weight="bold" font-size="8.2" fill="#fff">S</text><path d="M14.1 6.9H19.3M16.7 7.6V9.9" fill="none" stroke="#2b6fd3" stroke-width="1.5"/><path d="M18.8 5.1L21.2 6.9L18.8 8.7Z" fill="#2b6fd3"/></svg>
<svg style="position:absolute;left:783px;top:530px" width="26" height="24" viewBox="0 0 26 24"><path fill="none" stroke="#2b6fd3" stroke-width="1.4" d="M7.89 6.46A8.3 8.3 0 1 1 11.56 21.17"/><path fill="#2b6fd3" d="M5.8 5L5.1 8.9L9.4 8.5Z"/><rect x="4.13" y="10.86" width="1.4" height="1.4" fill="#2b6fd3"/><rect x="4.28" y="14.45" width="1.4" height="1.4" fill="#2b6fd3"/><rect x="5.85" y="17.52" width="1.4" height="1.4" fill="#2b6fd3"/><rect x="8.28" y="19.56" width="1.4" height="1.4" fill="#2b6fd3"/><path fill="none" stroke="#2b6fd3" stroke-width="1.4" d="M13 8.5V13.2H17.3"/></svg>
<div style="position:absolute;left:816px;top:531px;width:40px;height:23px;background:#cfe0f3;border-radius:2px"></div>
<div class="t" style="left:835px;top:537.69px;font-size:11px;line-height:11px;color:#000;font-weight:normal;transform:scaleY(1.06);transform-origin:0 9.31px;">Storno</div>
<div style="position:absolute;left:846px;top:522px;width:274px;height:82px;background:#fff;border:1px solid #8a8a8a;border-right:none;box-sizing:border-box"></div>
<div style="position:absolute;left:867px;top:523px;width:214px;height:27px;border:3px solid #e8446a;box-sizing:border-box"></div>
<div class="t" style="left:882.5px;top:530.84px;font-size:12px;line-height:12px;color:#000;font-weight:normal;letter-spacing:-0.08px"><u>P</u>řidělit tiskárnu sestavě za uživatele</div>
<div class="t" style="left:882.5px;top:556.84px;font-size:12px;line-height:12px;color:#000;font-weight:normal;letter-spacing:-0.08px">Př<u>i</u>dělit tiskárnu sestavě za počítač</div>
<div class="t" style="left:882.5px;top:581.84px;font-size:12px;line-height:12px;color:#000;font-weight:normal;letter-spacing:-0.08px"><u>S</u>estavu tisknout na výchozí tiskárně</div>
<div style="position:absolute;left:842px;top:492px;width:48px;height:32px;border:3px solid #e8446a;box-sizing:border-box"></div>
</body></html>
